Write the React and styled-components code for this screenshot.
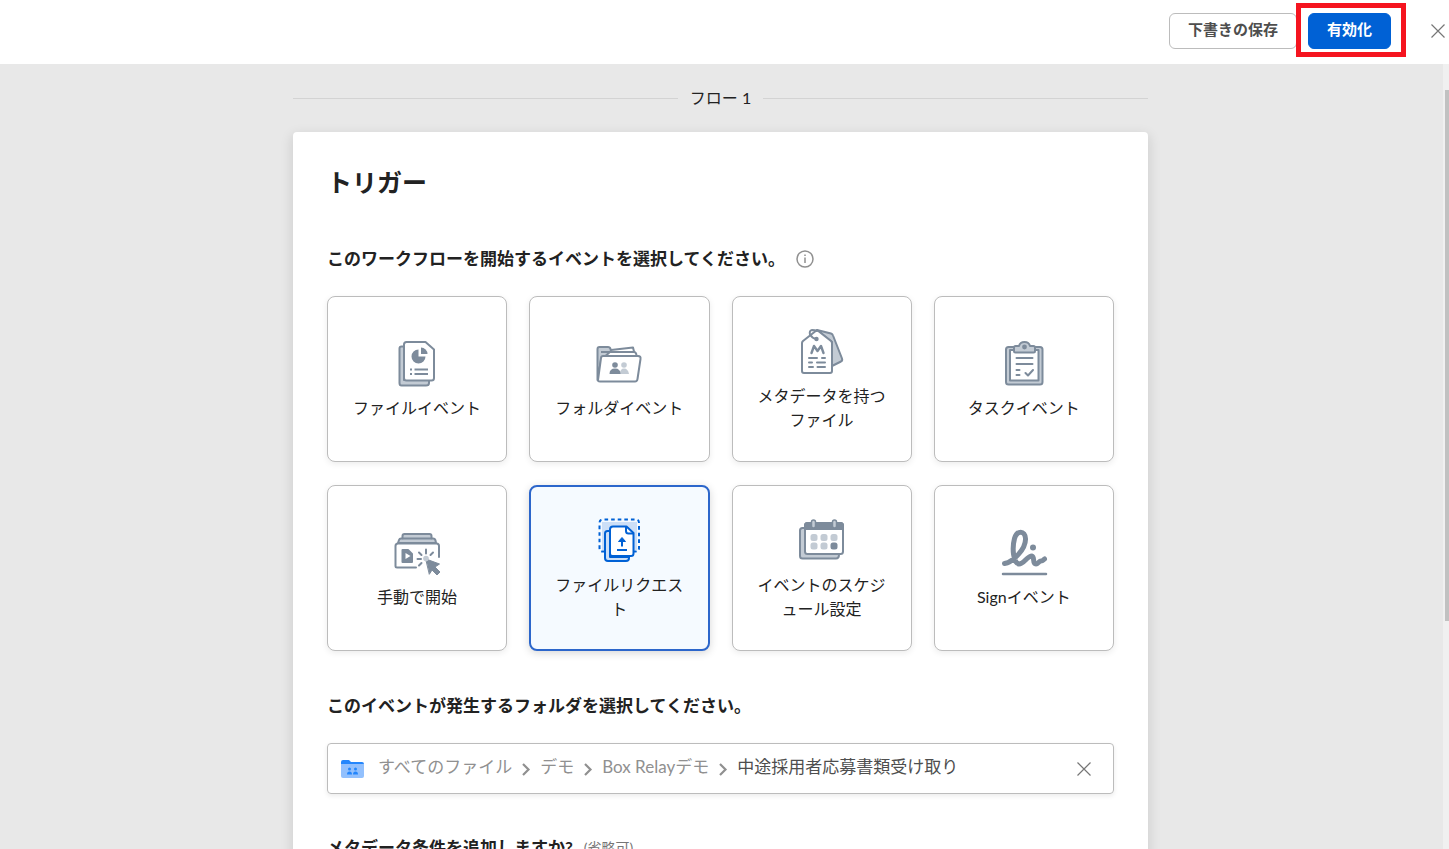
import React, { useState } from 'react';
import styled, { createGlobalStyle, css } from 'styled-components';

const GlobalStyle = createGlobalStyle`
  * {
    box-sizing: border-box;
  }
  body {
    margin: 0;
    color: #222;
    font-family: Lato, 'Noto Sans CJK JP', sans-serif;
    font-size: 16px;
    line-height: 24px;
  }
  button {
    font-family: inherit;
    cursor: pointer;
  }
`;

const Page = styled.div`
  display: flex;
  flex-direction: column;
  height: 100vh;
  overflow: hidden;
  background: #e8e8e8;
`;

const Header = styled.header`
  display: flex;
  flex: none;
  align-items: center;
  justify-content: flex-end;
  gap: 11px;
  height: 64px;
  padding: 0 4px 2px 16px;
  background: #fff;
`;

const HeaderButton = styled.button`
  height: 36px;
  padding: 0 18px 4px;
  border: 1px solid ${({ $primary }) => ($primary ? '#0061d5' : '#bcbcbc')};
  border-radius: 6px;
  background: ${({ $primary }) => ($primary ? '#0061d5' : '#fff')};
  color: ${({ $primary }) => ($primary ? '#fff' : '#4e4e4e')};
  font-size: 15px;
  font-weight: 700;
  line-height: 20px;
`;

const Highlight = styled.div`
  position: relative;
  display: flex;
  margin-right: 29px;

  &::after {
    content: '';
    position: absolute;
    inset: -10px -15px -8px -12px;
    border: 5px solid #f5141f;
    pointer-events: none;
  }
`;

const IconButton = styled.button`
  display: flex;
  padding: 0;
  border: 0;
  background: none;
  color: #767676;
`;

const Body = styled.div`
  display: flex;
  flex: 1;
  min-height: 0;
`;

const Main = styled.main`
  flex: 1;
  overflow: hidden;
  padding: 0 24px;
`;

const Column = styled.div`
  max-width: 855px;
  margin: 0 auto;
`;

const ScrollTrack = styled.div`
  display: flex;
  flex: none;
  flex-direction: column;
  align-items: flex-end;
  width: 8px;
  padding-top: 26px;
  border-left: 2px solid #e8e8e8;
  background: #f0f0f0;
`;

const ScrollThumb = styled.div`
  width: 4px;
  height: 70%;
  background: #c1c1c1;
`;

const FlowDivider = styled.div`
  display: flex;
  align-items: center;
  gap: 12px;
  height: 68px;

  &::before,
  &::after {
    content: '';
    flex: 1;
    height: 1px;
    background: #d3d3d3;
  }
`;

const Panel = styled.section`
  padding: 32px 34px;
  border-radius: 4px;
  background: #fff;
  box-shadow: 0 4px 12px 2px rgba(0, 0, 0, 0.1);
`;

const Title = styled.h1`
  margin: 0 0 47px;
  font-size: 25px;
  font-weight: 700;
  line-height: 36px;
`;

const Question = styled.h2`
  display: flex;
  align-items: center;
  gap: 11px;
  margin: 0 0 25px;
  font-size: 17px;
  font-weight: 700;
  line-height: 24px;
`;

const Optional = styled.span`
  color: #767676;
  font-size: 14px;
  font-weight: 400;
`;

const TileGrid = styled.div`
  display: grid;
  grid-template-columns: repeat(4, 1fr);
  gap: 23px 22px;
  margin-bottom: 43px;
`;

const Tile = styled.button`
  display: flex;
  flex-direction: column;
  align-items: center;
  justify-content: center;
  height: 166px;
  padding: 2px 24px 0;
  border: 1px solid #bcbcbc;
  border-radius: 8px;
  background: #fff;
  box-shadow: 0 2px 6px rgba(0, 0, 0, 0.08);
  color: #222;
  font-size: 16px;
  line-height: 24px;

  ${({ $selected }) =>
    $selected &&
    css`
      border: 2px solid #2c66cb;
      background: #f5faff;
      box-shadow: 0 2px 8px rgba(0, 0, 0, 0.16);
    `}
`;

const TileIcon = styled.svg`
  display: block;
  flex: none;
  width: 48px;
  height: 48px;
  margin-bottom: 8px;
`;

const FolderField = styled.div`
  display: flex;
  align-items: center;
  height: 51px;
  margin-bottom: 42px;
  padding: 0 22px 0 13px;
  border: 1px solid #bcbcbc;
  border-radius: 4px;
  box-shadow: 0 2px 5px rgba(0, 0, 0, 0.08);
`;

const Crumbs = styled.nav`
  display: flex;
  flex: 1;
  align-items: center;
  gap: 9px;
  margin-left: 13px;
  padding-bottom: 4px;
  font-size: 17px;
`;

const Crumb = styled.a`
  color: ${({ $current }) => ($current ? '#4e4e4e' : '#909090')};
  text-decoration: none;
`;

const ChevronSvg = styled.svg`
  flex: none;
  margin-top: 4px;
`;

const GREY = '#7d8b9b';
const PALE = '#c3cbd4';

const FileIcon = () => (
  <TileIcon viewBox="0 0 48 48" fill="none" stroke={GREY} strokeWidth="2" strokeLinejoin="round">
    <path d="M11 6.500H8.500q-2 0-2 2V43q0 2.500 2 2.500H33q3 0 3-2.500V40H11z" fill={PALE} />
    <path d="M13.500 2H32.500L41 9.500V38q0 2.500-2.500 2.500h-25Q11 40.500 11 38V4.500Q11 2 13.500 2z" fill="#fff" />
    <path d="M25.500 9.500a7 7 0 1 0 7 7h-7z" fill={GREY} stroke="none" />
    <path d="M28 7.500v6.500h6.500a6.500 6.500 0 0 0-6.500-6.500z" fill={GREY} stroke="none" />
    <path d="M17 29.500h2M21.500 29.500H35M17 34h2M21.500 34H35" />
  </TileIcon>
);

const FolderIcon = () => (
  <TileIcon viewBox="0 0 48 48" fill="none" stroke={GREY} strokeWidth="2" strokeLinejoin="round">
    <path d="M2.500 40V9q0-2 2-2H13q2 0 2.500 2l.5 2L6 20z" fill={PALE} />
    <path d="M16 10l22-2.500 1 4M6 12h33q2 0 2.500 3" fill="#fff" />
    <path d="M3 40L6 18q.3-2 2-2h35q3 0 2.500 3l-3 20q-.3 2.500-2.500 2.500H5q-2 0-2-1.500z" fill="#fff" />
    <g stroke="none" fill={PALE}>
      <circle cx="29" cy="25" r="2.800" />
      <path d="M25 34q0-5.500 4-5.500t5 5.500z" />
    </g>
    <g stroke="none" fill={GREY}>
      <circle cx="20" cy="25" r="2.800" />
      <path d="M14.500 34q0-5.500 5.500-5.500t5.500 5.500z" />
    </g>
  </TileIcon>
);

const MetadataIcon = () => (
  <TileIcon viewBox="0 0 48 48" fill="none" stroke={GREY} strokeWidth="2" strokeLinecap="round" strokeLinejoin="round">
    <path d="M19 2l14 3.500q1.500.5 2 2l9 23q.7 2-1 3L34 38V14z" fill={PALE} />
    <path d="M4 15q0-1 1-2L19 2l14 11q1 1 1 2v28q0 2-2 2H6q-2 0-2-2z" fill="#fff" />
    <circle cx="18.500" cy="11" r="2.200" fill={GREY} stroke="none" />
    <path d="M18 11q-4-1-6-4.500-1-4 2-4.500 3 0 5 1" />
    <path d="M13.500 25l2.500-7 3.500 5 3.500-5 2.500 7" strokeWidth="2.400" />
    <path d="M11 30h8M24 30h3M11 34.500h3M19 34.500h8M11 39h4M19.500 39h7.500" />
  </TileIcon>
);

const TaskIcon = () => (
  <TileIcon viewBox="0 0 48 48" fill="none" stroke={GREY} strokeWidth="2" strokeLinecap="round" strokeLinejoin="round">
    <rect x="6" y="7" width="36.500" height="37.500" rx="2.500" fill={PALE} />
    <path d="M10 10h28.500v30.500H10z" fill="#fff" />
    <path d="M15.500 6H19q1-4 5.500-4T30 6h3.500q1.500 0 1.500 1.500V11q0 1.500-1.500 1.500h-18Q14 12.500 14 11V7.500Q14 6 15.500 6z" fill={PALE} />
    <circle cx="24.500" cy="7" r="2.400" fill={GREY} stroke="none" />
    <path d="M16.500 18h16M16.500 24h16M16.500 30h3M16.500 35h3M25.500 33l2.500 2.500 5-5.500" />
  </TileIcon>
);

const ManualIcon = () => (
  <TileIcon viewBox="0 0 48 48" fill="none" stroke={GREY} strokeWidth="2" strokeLinecap="round" strokeLinejoin="round">
    <path d="M5 14l1-3q.5-1.500 2-1.500h1.500V7q0-2 2-2h25q2 0 2 2v2.500H40q2 0 2.500 2l.5 2.500z" fill={PALE} />
    <path d="M10 9.500h28" />
    <path d="M23 38.500H4q-1.500 0-1.500-1.500V17q0-2.500 2.500-2.500h38.500q2.500 0 2.500 2.500v11" />
    <path d="M9.500 21h5.500l4 4v8H9.500z" fill={GREY} />
    <path d="M12.500 24v6l5-3z" fill="#fff" stroke="none" />
    <path d="M33 30l13.500 5-4.500 3 5 5-3 3-5-5-2.500 4z" fill={GREY} stroke={GREY} strokeWidth="1" />
    <path d="M33 20.500v4M26 23.500l2.500 2.500M24.500 30h3.500M26 36.500l2.500-2.500M37.500 26l2.500-2.500" />
    <circle cx="33" cy="29.500" r="2.800" fill={PALE} stroke="none" />
  </TileIcon>
);

const RequestIcon = () => (
  <TileIcon viewBox="0 0 48 48" fill="none" stroke="#0061d5" strokeWidth="2" strokeLinejoin="round">
    <rect x="7" y="5" width="35" height="28" fill="#ccdff7" stroke="none" />
    <path
      d="M10 34.500H8Q4.500 34.500 4.500 31V6Q4.500 2.500 8 2.500H40.500Q44 2.500 44 6V31Q44 34.500 40.500 34.500H39"
      strokeDasharray="3.600 3"
    />
    <path d="M15 14h-2.500q-2.500 0-2.500 2.500V41q0 3 3 3h18q3 0 3-3v-1H15z" fill="#ccdff7" />
    <path d="M18 9.500h13.500L38.500 16v20.500q0 2.500-2.500 2.500H17.500Q15 39 15 36.500v-24q0-3 3-3z" fill="#fff" />
    <path d="M31 9.500V14q0 2.500 2.500 2.500h5" />
    <path d="M27 29.500V23M22 33h10" />
    <path d="M27 20.500l3.500 4h-7z" fill="#0061d5" strokeWidth="1" />
  </TileIcon>
);

const ScheduleIcon = () => (
  <TileIcon viewBox="0 0 48 48" fill="none" stroke={GREY} strokeWidth="2" strokeLinejoin="round">
    <path d="M7 11H4.500Q2 11 2 13.500V39q0 2.500 2.500 2.500H38q3 0 3-4z" fill={PALE} />
    <rect x="7" y="6" width="38" height="31" rx="2.500" fill="#fff" />
    <path d="M7 8.500Q7 6 9.500 6h33Q45 6 45 8.500V12H7z" fill={GREY} />
    <rect x="13.500" y="3" width="4" height="8" rx="2" fill={PALE} strokeWidth="1.500" />
    <rect x="34.500" y="3" width="4" height="8" rx="2" fill={PALE} strokeWidth="1.500" />
    <g fill={PALE} stroke="none">
      <rect x="12.500" y="17" width="7" height="7" rx="2.500" />
      <rect x="22.500" y="17" width="7" height="7" rx="2.500" />
      <rect x="32.500" y="17" width="7" height="7" rx="2.500" />
      <rect x="12.500" y="25.500" width="7" height="7" rx="2.500" />
      <rect x="22.500" y="25.500" width="7" height="7" rx="2.500" />
      <rect x="32.500" y="25.500" width="7" height="7" rx="2.500" fill={GREY} />
    </g>
  </TileIcon>
);

const SignIcon = () => (
  <TileIcon viewBox="0 0 48 48" fill="none" stroke={GREY} strokeLinecap="round" strokeLinejoin="round">
    <path
      d="M4.500 34.500C13 33 26 20 25.500 9.500 25 1 17 1 14.500 9.500 12 19 13 34 19 35c5 0 8-8 13-8 3 1 0 8 4 8 2 0 3-3 5-3 2 0 2-1 3.500-2"
      strokeWidth="5"
    />
    <circle cx="33" cy="18.500" r="3" fill={GREY} stroke="none" />
    <path d="M3 45h43" strokeWidth="2.500" />
  </TileIcon>
);

const InfoIcon = () => (
  <svg width="18" height="18" viewBox="0 0 18 18" fill="none" stroke="#909090" strokeWidth="1.500">
    <circle cx="9" cy="9" r="8" />
    <path d="M9 7.500V13M9 4.500V6" />
  </svg>
);

const CloseIcon = () => (
  <svg width="14" height="14" viewBox="0 0 14 14" fill="none" stroke="currentColor" strokeWidth="1.200">
    <path d="M.5.500l13 13M13.500.500l-13 13" />
  </svg>
);

const Chevron = () => (
  <ChevronSvg width="10" height="14" viewBox="0 0 10 14" fill="none" stroke="#909090" strokeWidth="2.200">
    <path d="M2 2l5.500 5.500L2 13" />
  </ChevronSvg>
);

const SharedFolderIcon = () => (
  <svg width="24" height="20" viewBox="0 0 24 20" fill="#2486fc">
    <path d="M0 8V3q0-2 2-2h6l2 2h11q2 0 2 2v4H0z" />
    <path d="M0 5h23v12q0 2-2 2H2q-2 0-2-2z" fill="#92c0fd" />
    <circle cx="8.500" cy="10" r="1.500" />
    <circle cx="14.500" cy="10" r="1.500" />
    <path d="M6 15.500q0-3 2.500-3t2.500 3zM12 15.500q0-3 2.500-3t2.500 3z" />
  </svg>
);

const EVENTS = [
  { id: 'file', label: 'ファイルイベント', Icon: FileIcon },
  { id: 'folder', label: 'フォルダイベント', Icon: FolderIcon },
  { id: 'metadata', label: 'メタデータを持つファイル', Icon: MetadataIcon },
  { id: 'task', label: 'タスクイベント', Icon: TaskIcon },
  { id: 'manual', label: '手動で開始', Icon: ManualIcon },
  { id: 'request', label: 'ファイルリクエスト', Icon: RequestIcon },
  { id: 'schedule', label: 'イベントのスケジュール設定', Icon: ScheduleIcon },
  { id: 'sign', label: 'Signイベント', Icon: SignIcon },
];

const PATH = ['すべてのファイル', 'デモ', 'Box Relayデモ', '中途採用者応募書類受け取り'];

const App = () => {
  const [selected, setSelected] = useState('request');

  return (
    <Page>
      <GlobalStyle />
      <Header>
        <HeaderButton type="button">下書きの保存</HeaderButton>
        <Highlight>
          <HeaderButton type="button" $primary>
            有効化
          </HeaderButton>
        </Highlight>
        <IconButton type="button" aria-label="閉じる">
          <CloseIcon />
        </IconButton>
      </Header>
      <Body>
        <Main>
          <Column>
            <FlowDivider>フロー 1</FlowDivider>
            <Panel>
              <Title>トリガー</Title>
              <Question>
                このワークフローを開始するイベントを選択してください。
                <InfoIcon />
              </Question>
              <TileGrid>
                {EVENTS.map(({ id, label, Icon }) => (
                  <Tile
                    key={id}
                    type="button"
                    aria-pressed={id === selected}
                    $selected={id === selected}
                    onClick={() => setSelected(id)}
                  >
                    <Icon />
                    <span>{label}</span>
                  </Tile>
                ))}
              </TileGrid>
              <Question>このイベントが発生するフォルダを選択してください。</Question>
              <FolderField>
                <SharedFolderIcon />
                <Crumbs>
                  {PATH.map((name, i) => (
                    <React.Fragment key={name}>
                      {i > 0 && <Chevron />}
                      <Crumb href="#" $current={i === PATH.length - 1}>
                        {name}
                      </Crumb>
                    </React.Fragment>
                  ))}
                </Crumbs>
                <IconButton type="button" aria-label="クリア">
                  <CloseIcon />
                </IconButton>
              </FolderField>
              <Question>
                メタデータ条件を追加しますか?
                <Optional>(省略可)</Optional>
              </Question>
            </Panel>
          </Column>
        </Main>
        <ScrollTrack>
          <ScrollThumb />
        </ScrollTrack>
      </Body>
    </Page>
  );
};

export default App;
